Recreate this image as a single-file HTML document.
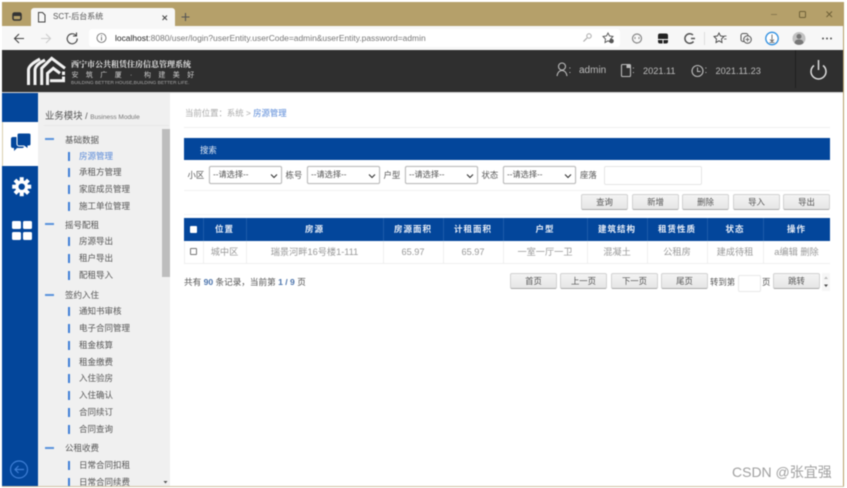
<!DOCTYPE html>
<html lang="zh">
<head>
<meta charset="utf-8">
<title>SCT-后台系统</title>
<style>
html,body{margin:0;padding:0;width:847px;height:488px;overflow:hidden;background:#fff;}
body{font-family:"Liberation Sans","Noto Sans CJK SC",sans-serif;position:relative;}
#w{position:absolute;left:0;top:0;width:847px;height:488px;filter:blur(.42px);}
.a{position:absolute;}
.t{position:absolute;white-space:nowrap;line-height:12px;}
.m{position:absolute;white-space:nowrap;line-height:12px;font-size:8.5px;color:#555;}
.d{position:absolute;left:45px;width:9px;height:1.5px;background:#5a93dc;}
.b{position:absolute;left:68px;width:2px;height:9px;background:#3f7fd6;}
.sel{position:absolute;top:166px;width:73px;height:18px;border:1px solid #bbb;border-radius:2px;box-sizing:border-box;background:#fff;font-size:8.2px;line-height:16px;color:#555;padding-left:3px;box-shadow:0 0 1px #ccc;}
.sel svg{position:absolute;right:3px;top:5px;}
.lb{position:absolute;top:169px;font-size:8.4px;color:#555;line-height:12px;white-space:nowrap;}
.btn{position:absolute;height:16px;width:47px;box-sizing:border-box;background:linear-gradient(#f3f3f3,#e6e6e6);border:1px solid #d2d2d2;border-bottom-color:#aaa;border-radius:2px;text-align:center;font-size:8.4px;line-height:15px;color:#555;}
.th{position:absolute;top:218px;height:23px;line-height:23px;text-align:center;color:#e9eef7;font-size:8.5px;font-weight:bold;letter-spacing:1px;white-space:nowrap;}
.td{position:absolute;top:241px;height:22px;line-height:23px;text-align:center;color:#999;font-size:9.2px;white-space:nowrap;}
.sep{position:absolute;width:1px;}
</style>
</head>
<body>
<div id="w">
<!-- frame -->
<div class="a" style="left:2px;top:2px;width:842px;height:485px;background:#b5a06a;"></div>
<div class="a" style="left:2px;top:26px;width:841px;height:24px;background:#f7f7f7;"></div>
<div class="a" style="left:31px;top:8px;width:144px;height:18px;background:#f7f7f7;border-radius:3px 3px 0 0;"></div>
<svg class="a" style="left:0;top:0" width="847" height="50">
<rect x="13" y="13" width="8" height="7" rx="1.500" fill="none" stroke="#333" stroke-width="1.500"/><rect x="13" y="13" width="8" height="3" fill="#333"/>
<path d="M38.500 12.500h4l2.500 2.500v7h-6.500z" fill="none" stroke="#444" stroke-width="1"/>
<path d="M162.500 15.500l4.500 4.500M167 15.500l-4.500 4.500" stroke="#444" stroke-width="1"/>
<path d="M185.500 13v8M181.500 17h8" stroke="#555" stroke-width="1.100"/>
<path d="M771 14.500h6" stroke="#8a7a50" stroke-width="1"/>
<rect x="799.500" y="11.500" width="6" height="6" rx="1" fill="none" stroke="#6f6138" stroke-width="1"/>
<path d="M826.500 11.500l5.500 5.500M832 11.500l-5.500 5.500" stroke="#6f6138" stroke-width="1"/>
<path d="M24 38.500H15M19 34l-4.500 4.500 4.500 4.500" fill="none" stroke="#444" stroke-width="1.100"/>
<path d="M50 38.500H41M46 34l4.500 4.500-4.500 4.500" fill="none" stroke="#ccc" stroke-width="1.100"/>
<path d="M76 35.500a5 5 0 1 0 1.200 3M76.500 32.500v3.500h-3.500" fill="none" stroke="#444" stroke-width="1.100"/>
<rect x="89" y="29" width="531" height="18" rx="3" fill="#fff"/>
<circle cx="101.500" cy="38" r="4.500" fill="none" stroke="#666" stroke-width=".8"/><path d="M101.500 37v3.500M101.500 35.300v.9" stroke="#666" stroke-width=".9"/>
<circle cx="589" cy="36" r="2.200" fill="none" stroke="#aaa"/><path d="M587 38l-3.500 3.500" stroke="#aaa" stroke-width="1.200"/>
<path d="M608 33l1.500 3 3.500.5-2.500 2.500.5 3.500-3-1.700-3 1.700.5-3.500-2.500-2.500 3.500-.5z" fill="none" stroke="#555" stroke-width=".9"/><circle cx="611.500" cy="41" r="2.300" fill="#555"/>
<circle cx="637" cy="38.500" r="4.500" fill="none" stroke="#888" stroke-width="1.200"/><path d="M635 37v2M639 37v2" stroke="#888"/>
<rect x="658" y="33.500" width="10" height="10" rx="2" fill="#222"/><path d="M658 39.500h10M663 39.500v4" stroke="#fff" stroke-width=".9"/>
<path d="M693 35a4.800 4.800 0 1 0 .5 6.500M691 38.500h4" fill="none" stroke="#555" stroke-width="1.500"/>
<path d="M704.500 32v13" stroke="#ddd"/>
<path d="M719 33l1.500 3 3.500.5-2.500 2.500.5 3.500-3-1.700-3 1.700.5-3.500-2.500-2.500 3.500-.5z" fill="none" stroke="#444" stroke-width=".9"/><path d="M724 36h2.500M724 39h2.500" stroke="#444" stroke-width=".8"/>
<rect x="741" y="33.500" width="7" height="8" rx="2" fill="none" stroke="#555"/><circle cx="747.500" cy="39.500" r="3.800" fill="#f7f7f7" stroke="#555"/><path d="M747.500 37.500v4M745.500 39.500h4" stroke="#555" stroke-width=".8"/>
<circle cx="772" cy="38.500" r="6.200" fill="#fff" stroke="#2f8fe0" stroke-width="1.300"/><path d="M772 34.500v6.500M770 39.500l2 2 2-2M769.500 42.500h5" fill="none" stroke="#555" stroke-width=".8"/>
<circle cx="799" cy="38.500" r="6.500" fill="#c2c2c2"/><circle cx="799" cy="36.500" r="2.500" fill="#777"/><path d="M794.500 43c.5-3 2-3.500 4.500-3.500s4 .5 4.500 3.500a6.500 6.500 0 0 1-9 0z" fill="#777"/>
<circle cx="823" cy="38.500" r="1" fill="#555"/><circle cx="827" cy="38.500" r="1" fill="#555"/><circle cx="831" cy="38.500" r="1" fill="#555"/>
</svg>
<div class="t" style="left:53px;top:11px;font-size:8px;color:#555;">SCT-后台系统</div>
<div class="t" style="left:115px;top:32px;font-size:8.450px;color:#777;"><span style="color:#222">localhost</span>:8080/user/login?userEntity.userCode=admin&amp;userEntity.password=admin</div>

<!-- header -->
<div class="a" style="left:2px;top:50px;width:841px;height:42px;background:#2f2f2f;"></div>
<div class="a" style="left:795px;top:50px;width:1px;height:38px;background:#1f1f1f;"></div>
<svg class="a" style="left:0;top:50px" width="847" height="42">
<g fill="none" stroke="#f2f2f2" stroke-width="3">
<path d="M28.500 35V20Q28.500 15 40 9"/>
<path d="M35 35V20Q35 15 45 10"/>
<path d="M41.700 35V18.300L51.700 8.300L65 18.300"/>
<path d="M47.500 35V23.300L53.300 18.300L60 23.300"/>
<path d="M50 30.700H65"/>
<path d="M63.500 21.500v3.500M63.500 26.500v4"/>
</g>
<circle cx="562" cy="16.500" r="3.500" fill="none" stroke="#bbb" stroke-width="1.100"/>
<path d="M557 26c.7-4 2.500-5.500 5-5.500s4.300 1.500 5 5.500" fill="none" stroke="#bbb" stroke-width="1.100"/>
<rect x="621.500" y="14.500" width="9" height="12" rx="1" fill="none" stroke="#bbb" stroke-width="1.100"/>
<rect x="626.500" y="14.500" width="3.500" height="3.500" fill="#bbb"/>
<circle cx="697.500" cy="21" r="5.500" fill="none" stroke="#bbb" stroke-width="1.100"/>
<path d="M697.500 17.500V21.500h3" fill="none" stroke="#bbb" stroke-width="1"/>
<path d="M814 15.500a7.500 7.500 0 1 0 9 0" fill="none" stroke="#ddd" stroke-width="1.500"/>
<path d="M818.500 10v10" stroke="#ddd" stroke-width="1.500"/>
</svg>
<div class="t" style="left:71px;top:58.500px;font-size:8px;font-weight:bold;color:#e8e8e8;font-family:'Liberation Serif','Noto Serif CJK SC',serif;">西宁市公共租赁住房信息管理系统</div>
<div class="t" style="left:71.500px;top:70px;font-size:7px;color:#ccc;letter-spacing:7.400px;">安筑广厦</div>
<div class="t" style="left:130px;top:70px;font-size:7px;color:#ccc;">·</div>
<div class="t" style="left:144px;top:70px;font-size:7px;color:#ccc;letter-spacing:7.400px;">构建美好</div>
<div class="t" style="left:71px;top:78px;font-size:4.800px;color:#aaa;">BUILDING BETTER HOUSE,BUILDING BETTER LIFE.</div>
<div class="t" style="left:568.500px;top:65px;font-size:10px;color:#bbb;">:</div>
<div class="t" style="left:579px;top:65px;font-size:10px;color:#bbb;">admin</div>
<div class="t" style="left:632px;top:65px;font-size:10px;color:#bbb;">:</div>
<div class="t" style="left:643px;top:65px;font-size:9.200px;color:#bbb;">2021.11</div>
<div class="t" style="left:704.500px;top:65px;font-size:10px;color:#bbb;">:</div>
<div class="t" style="left:715.500px;top:65px;font-size:9.200px;color:#bbb;">2021.11.23</div>

<!-- body -->
<div class="a" style="left:2px;top:92px;width:841px;height:394px;background:#fff;"></div>
<div class="a" style="left:2px;top:92px;width:841px;height:1px;background:#d8d8d8;"></div>
<div class="a" style="left:2px;top:93px;width:36px;height:393px;background:#03469b;"></div>
<div class="a" style="left:38px;top:93px;width:132px;height:393px;background:#f0f0f0;"></div>
<div class="a" style="left:3px;top:122px;width:35px;height:44px;background:#fff;"></div>
<div class="a" style="left:2px;top:122px;width:1px;height:44px;background:#d9cfae;"></div>
<svg class="a" style="left:0;top:120px" width="38" height="130">
<path d="M13 17h9a2 2 0 0 1 2 2v7a2 2 0 0 1-2 2h-5l-3 3v-3h-1a2 2 0 0 1-2-2v-7a2 2 0 0 1 2-2z" fill="#03469b"/>
<path d="M19 13h10a2 2 0 0 1 2 2v9a2 2 0 0 1-2 2h-1v3l-4-3h-5a2 2 0 0 1-2-2v-9a2 2 0 0 1 2-2z" fill="#03469b" stroke="#fff" stroke-width="1"/>
<g transform="translate(21.700,66.700)" fill="#fff">
<circle r="6.500"/>
<rect x="-2" y="-9.500" width="4" height="19"/>
<rect x="-2" y="-9.500" width="4" height="19" transform="rotate(45)"/>
<rect x="-2" y="-9.500" width="4" height="19" transform="rotate(90)"/>
<rect x="-2" y="-9.500" width="4" height="19" transform="rotate(135)"/>
<circle r="3.200" fill="#03469b"/>
</g>
<rect x="12" y="101" width="9" height="8" rx="1.500" fill="#fff"/>
<rect x="23" y="101" width="9" height="8" rx="1.500" fill="#fff"/>
<rect x="12" y="112" width="9" height="8" rx="1.500" fill="#fff"/>
<rect x="23" y="112" width="9" height="8" rx="1.500" fill="#fff"/>
</svg>
<svg class="a" style="left:8px;top:459px" width="24" height="24">
<circle cx="11" cy="10.500" r="8.500" fill="none" stroke="#3f7fd6" stroke-width="1.200"/>
<path d="M16 10.500H7M10.500 7L7 10.500l3.500 3.500" fill="none" stroke="#3f7fd6" stroke-width="1.200"/>
</svg>

<div class="t" style="left:45px;top:110px;font-size:9.400px;color:#555;">业务模块 <span style="font-size:9px">/</span> <span style="font-size:6.500px;color:#777;">Business Module</span></div>
<div class="a" style="left:44px;top:125px;width:125px;height:1px;background:#e8e8e8;"></div>

<div class="a" style="left:161.500px;top:129px;width:8px;height:148px;background:#bdbdbd;"></div>
<svg class="a" style="left:161px;top:477px" width="9" height="9"><path d="M2.500 4h4l-2 2.500z" fill="#555"/></svg>

<!-- menu -->
<div class="d" style="top:138px"></div><div class="m" style="left:65px;top:134px">基础数据</div>
<div class="b" style="top:151.500px"></div><div class="m" style="left:79px;top:149.500px;color:#5a8ad8">房源管理</div>
<div class="b" style="top:168px"></div><div class="m" style="left:79px;top:166px">承租方管理</div>
<div class="b" style="top:185px"></div><div class="m" style="left:79px;top:182.500px">家庭成员管理</div>
<div class="b" style="top:202px"></div><div class="m" style="left:79px;top:199.500px">施工单位管理</div>
<div class="d" style="top:223px"></div><div class="m" style="left:65px;top:219px">摇号配租</div>
<div class="b" style="top:237px"></div><div class="m" style="left:79px;top:235px">房源导出</div>
<div class="b" style="top:254px"></div><div class="m" style="left:79px;top:252px">租户导出</div>
<div class="b" style="top:271px"></div><div class="m" style="left:79px;top:269px">配租导入</div>
<div class="d" style="top:294px"></div><div class="m" style="left:65px;top:289px">签约入住</div>
<div class="b" style="top:307px"></div><div class="m" style="left:79px;top:305px">通知书审核</div>
<div class="b" style="top:324px"></div><div class="m" style="left:79px;top:322px">电子合同管理</div>
<div class="b" style="top:341px"></div><div class="m" style="left:79px;top:339px">租金核算</div>
<div class="b" style="top:358px"></div><div class="m" style="left:79px;top:356px">租金缴费</div>
<div class="b" style="top:374px"></div><div class="m" style="left:79px;top:372px">入住验房</div>
<div class="b" style="top:391px"></div><div class="m" style="left:79px;top:389px">入住确认</div>
<div class="b" style="top:408px"></div><div class="m" style="left:79px;top:406px">合同续订</div>
<div class="b" style="top:425px"></div><div class="m" style="left:79px;top:423px">合同查询</div>
<div class="d" style="top:447px"></div><div class="m" style="left:65px;top:442px">公租收费</div>
<div class="b" style="top:461px"></div><div class="m" style="left:79px;top:459px">日常合同扣租</div>
<div class="b" style="top:478px"></div><div class="m" style="left:79px;top:476px">日常合同续费</div>

<!-- content -->
<div class="t" style="left:185px;top:107px;font-size:8.400px;color:#aaa;">当前位置：系统 &gt; <span style="color:#5a8ad8">房源管理</span></div>
<div class="a" style="left:184px;top:127px;width:646px;height:1px;background:#f0f0f0;"></div>
<div class="a" style="left:184px;top:138px;width:646px;height:22px;background:#03469b;"></div>
<div class="t" style="left:200px;top:143.500px;font-size:8.400px;color:#dfe7f3;">搜索</div>

<div class="lb" style="left:187.500px">小区</div>
<div class="sel" style="left:209px">--请选择--<svg width="8" height="8"><path d="M1 2.500l3 3 3-3" fill="none" stroke="#333" stroke-width="1.100"/></svg></div>
<div class="lb" style="left:285.500px">栋号</div>
<div class="sel" style="left:307px">--请选择--<svg width="8" height="8"><path d="M1 2.500l3 3 3-3" fill="none" stroke="#333" stroke-width="1.100"/></svg></div>
<div class="lb" style="left:383.500px">户型</div>
<div class="sel" style="left:405px">--请选择--<svg width="8" height="8"><path d="M1 2.500l3 3 3-3" fill="none" stroke="#333" stroke-width="1.100"/></svg></div>
<div class="lb" style="left:481.500px">状态</div>
<div class="sel" style="left:503px">--请选择--<svg width="8" height="8"><path d="M1 2.500l3 3 3-3" fill="none" stroke="#333" stroke-width="1.100"/></svg></div>
<div class="lb" style="left:580px">座落</div>
<div class="a" style="left:604px;top:166px;width:98px;height:19px;box-sizing:border-box;border:1px solid #e6e6e6;border-radius:2px;background:#fff;"></div>
<div class="a" style="left:184px;top:190px;width:646px;height:1px;background:#f2f2f2;"></div>
<div class="a" style="left:184px;top:214px;width:646px;height:1px;background:#f5f5f5;"></div>

<div class="btn" style="left:581px;top:194px">查询</div>
<div class="btn" style="left:632px;top:194px">新增</div>
<div class="btn" style="left:682px;top:194px">删除</div>
<div class="btn" style="left:733px;top:194px">导入</div>
<div class="btn" style="left:783px;top:194px">导出</div>

<!-- table -->
<div class="a" style="left:184px;top:218px;width:646px;height:23px;background:#03469b;"></div>
<div class="a" style="left:190px;top:226px;width:7px;height:7px;background:#fff;border-radius:1px;"></div>
<div class="th" style="left:203px;width:43px">位置</div>
<div class="th" style="left:246px;width:137px">房源</div>
<div class="th" style="left:383px;width:60px">房源面积</div>
<div class="th" style="left:443px;width:60px">计租面积</div>
<div class="th" style="left:503px;width:84px">户型</div>
<div class="th" style="left:587px;width:60px">建筑结构</div>
<div class="th" style="left:647px;width:60px">租赁性质</div>
<div class="th" style="left:707px;width:56px">状态</div>
<div class="th" style="left:763px;width:67px">操作</div>
<div class="sep" style="left:203px;top:218px;height:23px;background:#1d5aa8"></div>
<div class="sep" style="left:246px;top:218px;height:23px;background:#1d5aa8"></div>
<div class="sep" style="left:383px;top:218px;height:23px;background:#1d5aa8"></div>
<div class="sep" style="left:443px;top:218px;height:23px;background:#1d5aa8"></div>
<div class="sep" style="left:503px;top:218px;height:23px;background:#1d5aa8"></div>
<div class="sep" style="left:587px;top:218px;height:23px;background:#1d5aa8"></div>
<div class="sep" style="left:647px;top:218px;height:23px;background:#1d5aa8"></div>
<div class="sep" style="left:707px;top:218px;height:23px;background:#1d5aa8"></div>
<div class="sep" style="left:763px;top:218px;height:23px;background:#1d5aa8"></div>
<div class="a" style="left:190px;top:248px;width:7px;height:7px;box-sizing:border-box;border:1px solid #777;border-radius:1px;background:#fff;"></div>
<div class="td" style="left:203px;width:43px">城中区</div>
<div class="td" style="left:246px;width:137px">瑞景河畔16号楼1-111</div>
<div class="td" style="left:383px;width:60px">65.97</div>
<div class="td" style="left:443px;width:60px">65.97</div>
<div class="td" style="left:503px;width:84px">一室一厅一卫</div>
<div class="td" style="left:587px;width:60px">混凝土</div>
<div class="td" style="left:647px;width:60px">公租房</div>
<div class="td" style="left:707px;width:56px">建成待租</div>
<div class="td" style="left:763px;width:67px">a编辑 删除</div>
<div class="sep" style="left:184px;top:241px;height:22px;background:#efefef"></div>
<div class="sep" style="left:203px;top:241px;height:22px;background:#efefef"></div>
<div class="sep" style="left:246px;top:241px;height:22px;background:#efefef"></div>
<div class="sep" style="left:383px;top:241px;height:22px;background:#efefef"></div>
<div class="sep" style="left:443px;top:241px;height:22px;background:#efefef"></div>
<div class="sep" style="left:503px;top:241px;height:22px;background:#efefef"></div>
<div class="sep" style="left:587px;top:241px;height:22px;background:#efefef"></div>
<div class="sep" style="left:647px;top:241px;height:22px;background:#efefef"></div>
<div class="sep" style="left:707px;top:241px;height:22px;background:#efefef"></div>
<div class="sep" style="left:763px;top:241px;height:22px;background:#efefef"></div>
<div class="a" style="left:184px;top:263px;width:646px;height:1px;background:#efefef;"></div>

<div class="t" style="left:184px;top:276px;font-size:8.600px;color:#555;">共有 <b style="color:#4a73ac">90</b> 条记录，当前第 <b style="color:#4a73ac">1 / 9</b> 页</div>
<div class="btn" style="left:510px;top:273px">首页</div>
<div class="btn" style="left:560px;top:273px">上一页</div>
<div class="btn" style="left:611px;top:273px">下一页</div>
<div class="btn" style="left:661px;top:273px">尾页</div>
<div class="t" style="left:710px;top:276px;font-size:8.400px;color:#555;">转到第</div>
<div class="a" style="left:738px;top:275px;width:23px;height:17px;box-sizing:border-box;border:1px solid #e8e8e8;border-radius:2px;background:#fff;"></div>
<div class="t" style="left:762px;top:276px;font-size:8.400px;color:#555;">页</div>
<div class="btn" style="left:773px;top:273px">跳转</div>
<svg class="a" style="left:822px;top:273px" width="8" height="18"><rect width="8" height="18" fill="#f6f6f6"/><path d="M2 6l2-2.500L6 6z" fill="#bbb"/><path d="M2 11.500h4l-2 2.500z" fill="#444"/></svg>

<!-- watermark -->
<div class="t" style="left:732px;top:465px;font-size:14px;line-height:14px;color:#a0a0a0;">CSDN @张宜强</div>
<div class="a" style="left:2px;top:486px;width:842px;height:1px;background:#cfc4a4;"></div>
</div>
</body>
</html>
